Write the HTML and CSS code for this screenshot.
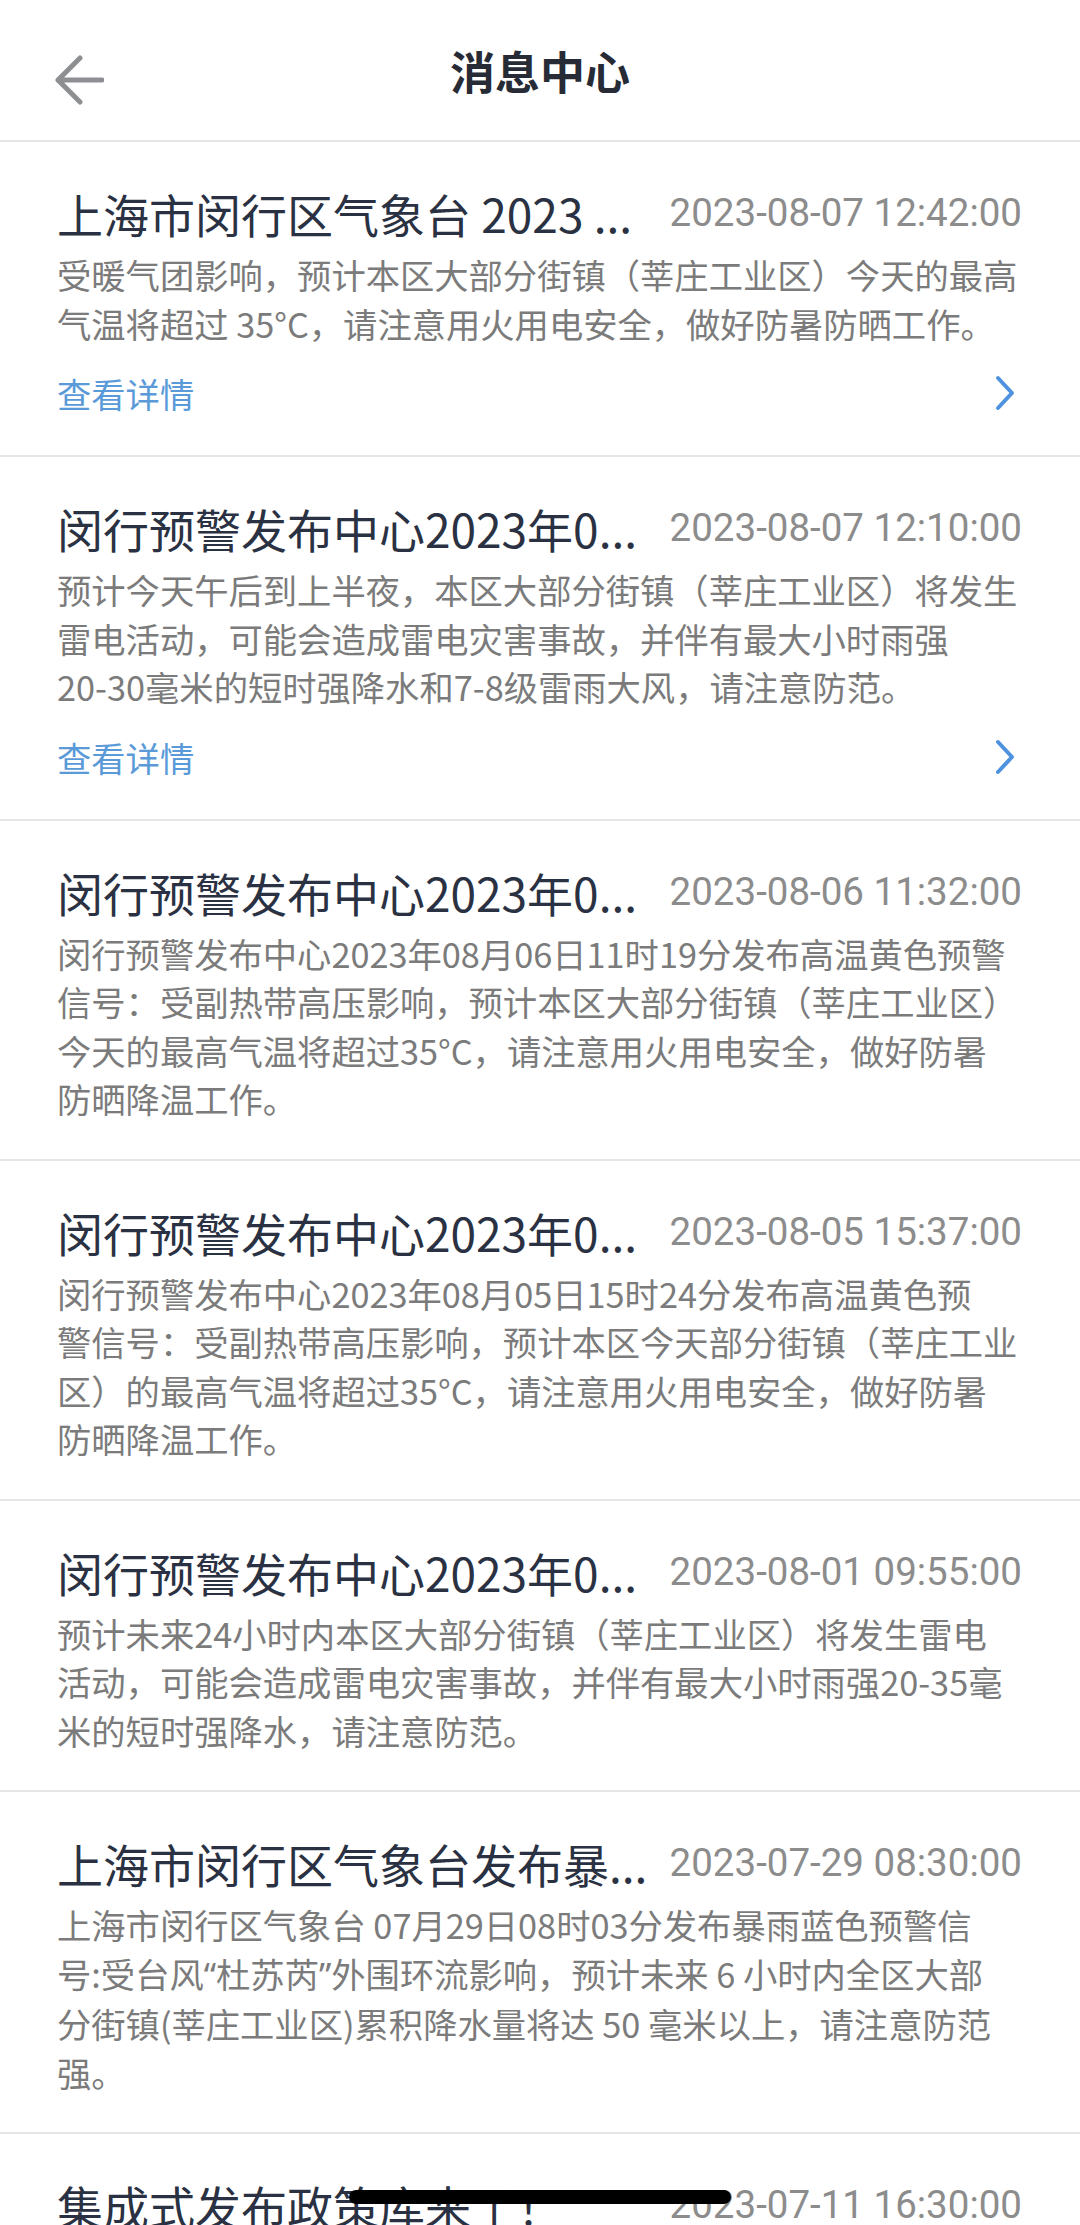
FILE: index.html
```html
<!DOCTYPE html>
<html lang="zh-CN">
<head>
<meta charset="utf-8">
<title>消息中心</title>
<link rel="stylesheet" href="styles.css">
</head>
<body>
<div class="screen">
  <header class="nav">
    <svg class="back" width="50" height="50" viewBox="0 0 50 50">
      <path d="M26 3 L4 25 L26 47 M4 25 H48" fill="none" stroke="#8e8f93" stroke-width="5" stroke-linecap="round" stroke-linejoin="round"/>
    </svg>
    <h1 class="nav-title">消息中心</h1>
  </header>

  <ul class="list">
    <li class="item">
      <div class="head"><span class="title">上海市闵行区气象台 2023 ...</span><span class="date">2023-08-07 12:42:00</span></div>
      <p class="body">受暖气团影响，预计本区大部分街镇（莘庄工业区）今天的最高<br>气温将超过 35°C，请注意用火用电安全，做好防暑防晒工作。</p>
      <div class="more"><span>查看详情</span>
        <svg class="chev" width="24" height="36" viewBox="0 0 24 36"><path d="M5 3 L19 18 L5 33" fill="none" stroke="#4f93e0" stroke-width="4" stroke-linecap="round" stroke-linejoin="round"/></svg>
      </div>
    </li>
    <li class="item">
      <div class="head"><span class="title">闵行预警发布中心2023年0...</span><span class="date">2023-08-07 12:10:00</span></div>
      <p class="body">预计今天午后到上半夜，本区大部分街镇（莘庄工业区）将发生<br>雷电活动，可能会造成雷电灾害事故，并伴有最大小时雨强<br>20-30毫米的短时强降水和7-8级雷雨大风，请注意防范。</p>
      <div class="more"><span>查看详情</span>
        <svg class="chev" width="24" height="36" viewBox="0 0 24 36"><path d="M5 3 L19 18 L5 33" fill="none" stroke="#4f93e0" stroke-width="4" stroke-linecap="round" stroke-linejoin="round"/></svg>
      </div>
    </li>
    <li class="item">
      <div class="head"><span class="title">闵行预警发布中心2023年0...</span><span class="date">2023-08-06 11:32:00</span></div>
      <p class="body">闵行预警发布中心2023年08月06日11时19分发布高温黄色预警<br>信号：受副热带高压影响，预计本区大部分街镇（莘庄工业区）<br>今天的最高气温将超过35°C，请注意用火用电安全，做好防暑<br>防晒降温工作。</p>
    </li>
    <li class="item">
      <div class="head"><span class="title">闵行预警发布中心2023年0...</span><span class="date">2023-08-05 15:37:00</span></div>
      <p class="body">闵行预警发布中心2023年08月05日15时24分发布高温黄色预<br>警信号：受副热带高压影响，预计本区今天部分街镇（莘庄工业<br>区）的最高气温将超过35°C，请注意用火用电安全，做好防暑<br>防晒降温工作。</p>
    </li>
    <li class="item">
      <div class="head"><span class="title">闵行预警发布中心2023年0...</span><span class="date">2023-08-01 09:55:00</span></div>
      <p class="body">预计未来24小时内本区大部分街镇（莘庄工业区）将发生雷电<br>活动，可能会造成雷电灾害事故，并伴有最大小时雨强20-35毫<br>米的短时强降水，请注意防范。</p>
    </li>
    <li class="item">
      <div class="head"><span class="title">上海市闵行区气象台发布暴...</span><span class="date">2023-07-29 08:30:00</span></div>
      <p class="body">上海市闵行区气象台 07月29日08时03分发布暴雨蓝色预警信<br>号:受台风<span class="latin">“</span>杜苏芮<span class="latin">”</span>外围环流影响，预计未来 6 小时内全区大部<br>分街镇(莘庄工业区)累积降水量将达 50 毫米以上，请注意防范<br>强。</p>
    </li>
    <li class="item">
      <div class="head"><span class="title">集成式发布政策库来了！</span><span class="date">2023-07-11 16:30:00</span></div>
      <p class="body">集成式发布政策库来了！</p>
    </li>
  </ul>
  <div class="home-bar"></div>
</div>
</body>
</html>
```
FILE: styles.css
```css
* { box-sizing: border-box; }
html, body {
  margin: 0;
  padding: 0;
  background: #ffffff;
}
body {
  font-family: "Noto Sans CJK SC", "Noto Sans", sans-serif;
  width: 1080px;
  height: 2225px;
  overflow: hidden;
}
.screen {
  position: relative;
  width: 1080px;
  height: 2225px;
  overflow: hidden;
}
.nav {
  position: relative;
  height: 142px;
  display: flex;
  align-items: center;
  justify-content: center;
  border-bottom: 2px solid #e6e6e8;
}
.back {
  position: absolute;
  left: 54px;
  top: 55px;
}
.nav-title {
  margin: 0;
  font-size: 45px;
  font-weight: 700;
  color: #272b36;
  line-height: 1;
  padding-top: 0;
}
.list {
  list-style: none;
  margin: 0;
  padding: 0;
}
.item {
  padding: 40px 58px 36px 57px;
  border-bottom: 2px solid #e6e6e8;
}
.head {
  display: flex;
  align-items: center;
  justify-content: space-between;
  height: 62px;
  margin-bottom: 6px;
  white-space: nowrap;
}
.title {
  font-size: 46px;
  color: #2a3142;
  line-height: 62px;
}
.date {
  flex-shrink: 0;
  font-family: Roboto, "Noto Sans", sans-serif;
  font-size: 38.5px;
  color: #8c8c8c;
  line-height: 62px;
}
.body {
  margin: 0;
  font-size: 34.3px;
  line-height: 48.5px;
  color: #7b7b7b;
  white-space: nowrap;
}
.latin {
  font-family: "Noto Sans", sans-serif;
}
.more {
  margin-top: 20px;
  height: 52px;
  display: flex;
  align-items: center;
  justify-content: space-between;
  font-size: 34.3px;
  color: #5a9ad8;
}
.chev {
  margin-right: 5px;
}
.home-bar {
  position: absolute;
  left: 349px;
  top: 2190px;
  width: 382px;
  height: 14px;
  border-radius: 7px;
  background: #000;
}
```
